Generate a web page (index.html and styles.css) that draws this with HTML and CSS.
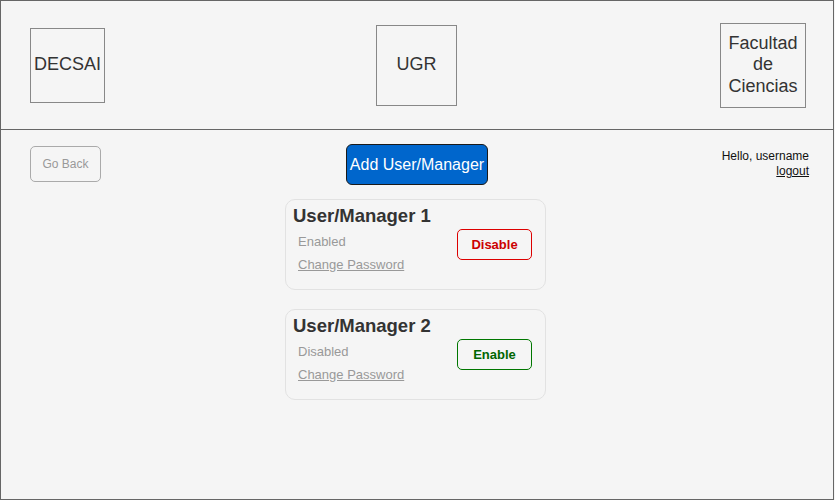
FILE: index.html
```html
<!DOCTYPE html>
<html lang="en">
<head>
<meta charset="utf-8">
<title>Users</title>
<link rel="stylesheet" href="styles.css">
</head>
<body>
<div class="frame">
  <header class="header">
    <div class="logo logo-decsai">DECSAI</div>
    <div class="logo logo-ugr">UGR</div>
    <div class="logo logo-fac">Facultad<br>de<br>Ciencias</div>
  </header>
  <main class="main">
    <div class="toolbar">
      <button class="btn-back">Go Back</button>
      <button class="btn-add">Add User/Manager</button>
      <div class="user">
        <div>Hello, username</div>
        <a class="logout" href="#">logout</a>
      </div>
    </div>
    <div class="cards">
      <div class="card">
        <div class="card-info">
          <div class="card-title">User/Manager 1</div>
          <div class="card-status">Enabled</div>
          <a class="card-link" href="#">Change Password</a>
        </div>
        <div class="btn-toggle btn-disable" role="button">Disable</div>
      </div>
      <div class="card">
        <div class="card-info">
          <div class="card-title">User/Manager 2</div>
          <div class="card-status">Disabled</div>
          <a class="card-link" href="#">Change Password</a>
        </div>
        <div class="btn-toggle btn-enable" role="button">Enable</div>
      </div>
    </div>
  </main>
</div>
</body>
</html>
```
FILE: styles.css
```css
* { box-sizing: border-box; }
html, body { margin: 0; padding: 0; background: #f5f5f5; }
body { font-family: "Liberation Sans", Arial, Helvetica, sans-serif; color: #333; }

button { appearance: none; -webkit-appearance: none; }

.frame {
  width: 834px;
  height: 500px;
  border: 1px solid #666;
  background: #f5f5f5;
  display: flex;
  flex-direction: column;
}

.header {
  height: 129px;
  border-bottom: 1px solid #666;
  display: grid;
  grid-template-columns: 1fr auto 1fr;
  align-items: center;
  padding: 0 27px 0 29px;
}

.logo {
  border: 1px solid #888;
  display: flex;
  align-items: center;
  justify-content: center;
  text-align: center;
  font-size: 18px;
  line-height: 21.5px;
  color: #333;
}
.logo-decsai { width: 75px; height: 75px; justify-self: start; }
.logo-ugr { width: 81px; height: 81px; margin-left: -3px; }
.logo-fac { width: 86px; height: 85px; justify-self: end; }

.main { flex: 1; }

.toolbar {
  display: grid;
  grid-template-columns: 1fr auto 1fr;
  align-items: start;
  padding: 14px 24px 0 29px;
}

.btn-back {
  justify-self: start;
  margin-top: 2px;
  width: 71px;
  height: 36px;
  border: 1px solid #aaa;
  border-radius: 5px;
  background: #f5f5f5;
  color: #999;
  font-family: inherit;
  font-size: 12px;
  padding: 0;
}

.btn-add {
  margin-right: 5px;
  width: 142px;
  height: 41px;
  background: #0066cc;
  border: 1px solid #1a1a1a;
  border-radius: 6px;
  color: #fff;
  font-family: inherit;
  font-size: 16px;
  padding: 0;
}

.user {
  justify-self: end;
  text-align: right;
  font-size: 12px;
  line-height: 15px;
  color: #111;
  margin-top: 5px;
}
.logout { color: #111; text-decoration: underline; }

.cards {
  display: flex;
  flex-direction: column;
  align-items: center;
  gap: 19px;
  padding-top: 14px;
  padding-right: 3px;
}

.card {
  width: 261px;
  height: 91px;
  border: 1px solid #e2e2e2;
  border-radius: 10px;
  padding: 5px 13px 0 7px;
  display: flex;
  justify-content: space-between;
  align-items: flex-start;
}

.card-info { display: flex; flex-direction: column; align-items: flex-start; }
.card-title {
  font-size: 18.5px;
  font-weight: bold;
  line-height: 22px;
  color: #333;
}
.card-status {
  margin-top: 2.5px;
  margin-left: 5px;
  font-size: 13px;
  line-height: 23px;
  color: #999;
}
.card-link {
  margin-left: 5px;
  font-size: 13px;
  line-height: 23px;
  color: #999;
  text-decoration: underline;
}

.btn-toggle {
  margin-top: 24px;
  width: 75px;
  height: 31px;
  border-radius: 5px;
  display: flex;
  align-items: center;
  justify-content: center;
  font-size: 13px;
  font-weight: bold;
}
.btn-disable { border: 1px solid #dd0000; color: #cc0000; }
.btn-enable { border: 1px solid #007700; color: #006600; }
```
